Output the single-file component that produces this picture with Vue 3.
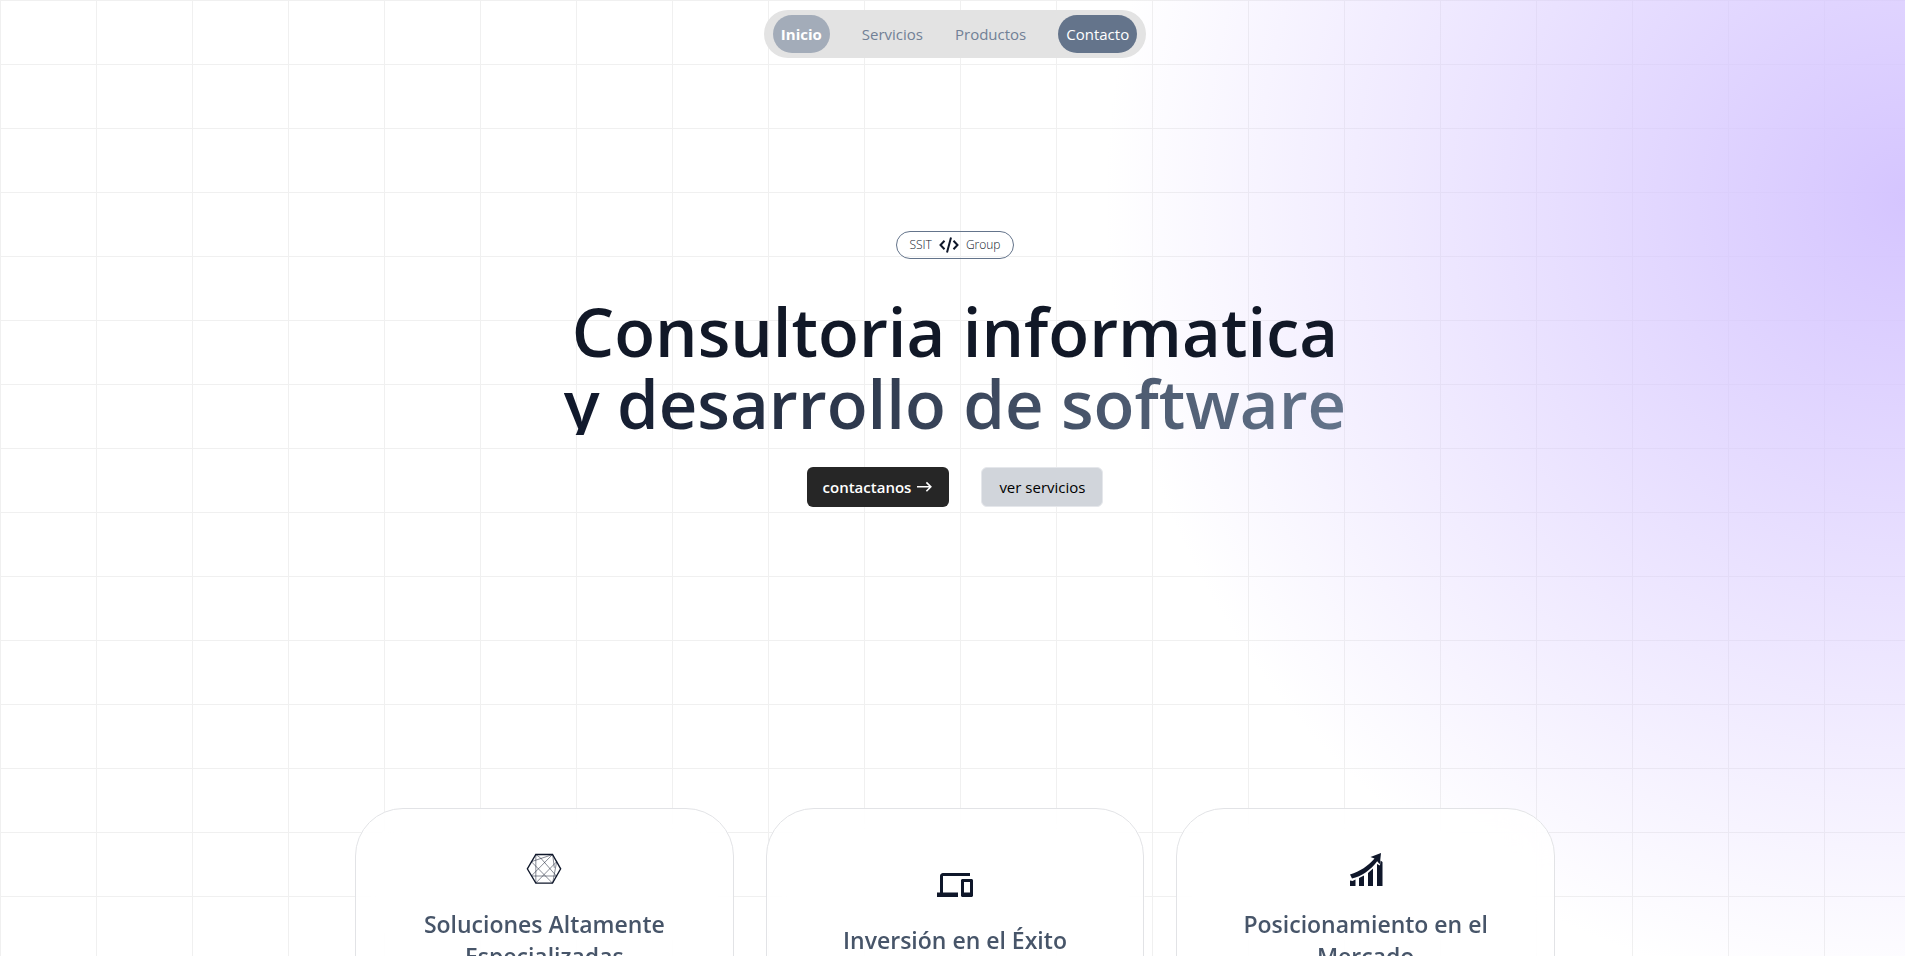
<script setup>
const links = [
  { label: 'Servicios', href: '#servicios' },
  { label: 'Productos', href: '#productos' },
]

const cards = [
  { icon: 'network', title: 'Soluciones Altamente Especializadas' },
  { icon: 'devices', title: 'Inversión en el Éxito' },
  { icon: 'growth', title: 'Posicionamiento en el Mercado' },
]
</script>

<template>
  <div class="page">
    <header class="topbar">
      <nav class="nav" aria-label="Principal">
        <a class="link active" href="#inicio">Inicio</a>
        <a v-for="l in links" :key="l.href" class="link" :href="l.href">{{ l.label }}</a>
        <a class="link cta" href="#contacto">Contacto</a>
      </nav>
    </header>

    <main class="content">
      <section id="inicio" class="hero">
        <div class="badge">
          <span>SSIT</span>
          <svg class="code" viewBox="0 0 20 16" fill="none" stroke="currentColor" stroke-width="2" aria-hidden="true">
            <path d="M5.500 3.800 1.500 8l4 4.200M14.500 3.800l4 4.200-4 4.200M12 .6 8 15.400" />
          </svg>
          <span>Group</span>
        </div>
        <h1 class="title">
          <span class="line">Consultoria informatica</span>
          <span class="line fade">y desarrollo de software</span>
        </h1>
        <div class="actions">
          <button type="button" class="btn dark">
            contactanos
            <svg class="arrow" viewBox="0 0 18 16" fill="none" stroke="currentColor" stroke-width="1.6" aria-hidden="true">
              <path d="M2 7.8h13.6M11.4 3.4l4.4 4.4-4.4 4.4" />
            </svg>
          </button>
          <button type="button" class="btn light">ver servicios</button>
        </div>
      </section>

      <section id="servicios" class="cards">
        <article v-for="c in cards" :key="c.title" class="card">
          <svg v-if="c.icon === 'network'" class="icon" viewBox="18 18 108 108" fill="none" stroke="currentColor" aria-hidden="true">
            <path stroke-width="4" d="M22 71.500 47.500 28.500h50l24.500 43-24.500 43h-50z" />
            <path
              stroke-width="1.500"
              d="M47.500 28.500v86M34 50l63-21M34 50l63 64M47.500 28.500 62 39l48 55M34 93l63-64M47.500 114 110 50M34 93h76M110 50l-12 64M98 28.500l5 40"
            />
          </svg>
          <svg v-else-if="c.icon === 'devices'" class="icon" viewBox="0 0 24 24" fill="currentColor" aria-hidden="true">
            <path d="M4 6h18V4H4c-1.100 0-2 .9-2 2v11H0v3h14v-3H4V6zm19 2h-6c-.55 0-1 .45-1 1v10c0 .55.45 1 1 1h6c.55 0 1-.45 1-1V9c0-.55-.45-1-1-1zm-1 9h-4v-7h4v7z" />
          </svg>
          <svg v-else class="icon" viewBox="0 0 36 36" fill="currentColor" aria-hidden="true">
            <path d="M2 29.500l2.500.5 3-1.500V35H2zM11 27l5-2.500V35h-5zM20 22l5-4.500V35h-5zM29 13l3 1.500.5-5 2 1.500v24H29z" />
            <path d="M2 23.500C12 20.500 20 15 26.500 7.500L22.500 6 33 2l-1.200 11.200-2.600-3C22.500 19 13.500 25.500 4 27.500z" />
          </svg>
          <h2 class="card-title">{{ c.title }}</h2>
        </article>
      </section>
    </main>
  </div>
</template>

<style>
body {
  margin: 0;
}
</style>

<style scoped>
.page {
  box-sizing: border-box;
  height: 100vh;
  padding: 10px 0 0 5px;
  overflow: hidden;
  font-family: "Open Sans", "Noto Sans", sans-serif;
  color: #0f172a;
  background-color: #fff;
  background-image:
    radial-gradient(circle 800px at 100% 200px, #d5c5ff, transparent),
    linear-gradient(to right, #f0f0f0 1px, transparent 1px),
    linear-gradient(to bottom, #f0f0f0 1px, transparent 1px);
  background-size: 100% 100%, 96px 64px, 96px 64px;
}

.topbar {
  display: flex;
  justify-content: center;
}

.nav {
  display: flex;
  align-items: center;
  gap: 32px;
  padding: 5px 9px;
  border-radius: 24px;
  background: #e3e3e3;
}

.link {
  font-size: 15px;
  line-height: 38px;
  color: #718096;
  text-decoration: none;
}

.active,
.cta {
  padding: 0 8px;
  border-radius: 19px;
  color: #fff;
}

.active {
  background: #a3acb9;
  font-weight: 700;
}

.cta {
  background: #64748b;
}

.content {
  display: flex;
  flex-direction: column;
  align-items: center;
}

.hero {
  display: flex;
  flex-direction: column;
  align-items: center;
  padding-top: 173px;
}

.badge {
  display: flex;
  align-items: center;
  gap: 7px;
  padding: 0 12px;
  border: 1px solid #64748b;
  border-radius: 14px;
  font-size: 12px;
  line-height: 26px;
  font-weight: 300;
}

.code {
  width: 20px;
  height: 16px;
}

.title {
  margin: 36px 0 0;
  font-size: 67px;
  line-height: 72px;
  font-weight: 600;
  text-align: center;
  color: #111827;
}

.line {
  display: block;
}

.fade {
  height: 68px;
  background: linear-gradient(to right, #0f172a, #64748b);
  background-clip: text;
  -webkit-background-clip: text;
  color: transparent;
}

.actions {
  display: flex;
  gap: 32px;
  margin-top: 32px;
}

.btn {
  display: flex;
  align-items: center;
  gap: 4px;
  height: 40px;
  padding: 0 16px;
  border: 0;
  border-radius: 6px;
  font-family: inherit;
  font-size: 15px;
}

.dark {
  background: #262626;
  color: #fff;
  font-weight: 600;
}

.light {
  border: 1px solid #e5e7eb;
  background: #d1d5db;
  color: #000;
  font-weight: 500;
  padding: 0 17px;
}

.arrow {
  width: 18px;
  height: 16px;
}

.cards {
  display: grid;
  grid-template-columns: repeat(3, 1fr);
  gap: 32px;
  width: 100%;
  max-width: 1200px;
  margin-top: 301px;
}

.card {
  display: flex;
  flex-direction: column;
  align-items: center;
  justify-content: center;
  gap: 21px;
  padding: 42px 48px;
  border: 1px solid #e2e3e6;
  border-radius: 48px;
  background: rgba(255, 255, 255, 0.8);
  backdrop-filter: blur(24px);
}

.icon {
  width: 36px;
  height: 36px;
}

.card-title {
  margin: 0;
  font-size: 23px;
  line-height: 32px;
  font-weight: 600;
  text-align: center;
  color: #475569;
}
</style>
